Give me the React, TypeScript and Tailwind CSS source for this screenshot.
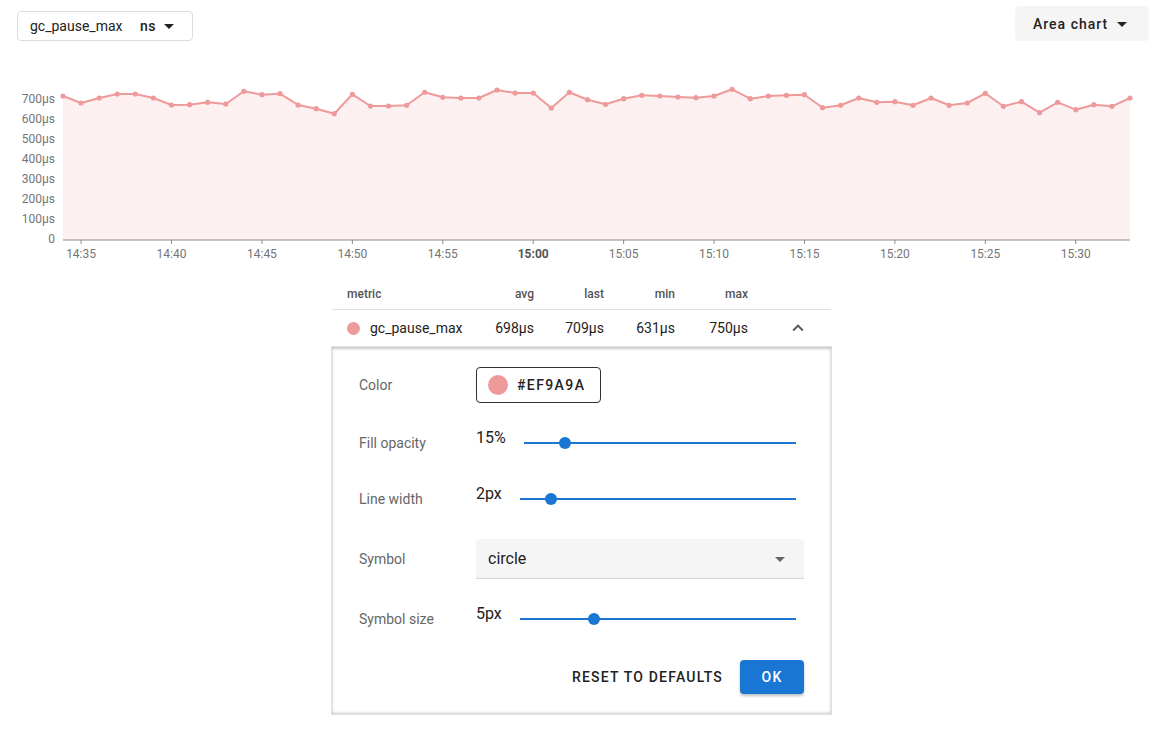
import React from 'react';

// y positions (page px) of each minute sample, 14:34 → 15:33
const ys = [
  96, 103, 98, 94, 94, 98, 105, 104.7, 102.3, 104, 91.3, 94.7, 93.7, 105, 108.7, 113.7, 94.3, 106, 106, 105.3,
  92.3, 97.3, 98, 98, 90, 93, 93, 108, 92.3, 99.7, 104.3, 98.7, 95.3, 96, 97, 97.7, 96, 89.3, 98.7, 96,
  95.3, 94.7, 107.7, 105.3, 98, 102.3, 101.7, 105.3, 98, 105.3, 103, 93.3, 106.3, 101.7, 112.7, 102.3, 109.7, 104.7, 106.3, 98,
];

const X0 = 63;
const X1 = 1130;
const BASE = 240;
const step = (X1 - X0) / (ys.length - 1);
const xAt = (i: number) => X0 + i * step;

const yTicks = ['700µs', '600µs', '500µs', '400µs', '300µs', '200µs', '100µs', '0'];
const xTicks = ['14:35', '14:40', '14:45', '14:50', '14:55', '15:00', '15:05', '15:10', '15:15', '15:20', '15:25', '15:30'];

const Caret: React.FC<{ className?: string }> = ({ className }) => (
  <svg viewBox="0 0 24 24" className={className} fill="currentColor">
    <path d="M7 10l5 5 5-5z" />
  </svg>
);

const Chart: React.FC = () => {
  const pts = ys.map((y, i) => `${xAt(i).toFixed(1)},${y}`).join(' ');
  const area = `${X0},${BASE} ${pts} ${X1},${BASE}`;
  return (
    <svg viewBox="0 41 1164 229" className="block w-[1164px] h-[229px]">
      <polygon points={area} fill="#EF9A9A" fillOpacity={0.15} />
      <polyline points={pts} fill="none" stroke="#EF9A9A" strokeWidth={2} strokeLinejoin="round" />
      {ys.map((y, i) => (
        <circle key={i} cx={xAt(i)} cy={y} r={2.6} fill="#EF9A9A" />
      ))}
      <line x1={X0} y1={BASE} x2={X1} y2={BASE} stroke="#8a8a8a" strokeWidth={1} />
      {yTicks.map((t, i) => (
        <text key={t} x={55} y={98 + i * 20.1 + 4.5} textAnchor="end" fontSize={12} fill="#757575">
          {t}
        </text>
      ))}
      {xTicks.map((t, i) => {
        const x = xAt(1 + i * 5);
        const bold = t === '15:00';
        return (
          <g key={t}>
            <line x1={x} y1={BASE} x2={x} y2={BASE + 4} stroke="#8a8a8a" strokeWidth={1} />
            <text
              x={x}
              y={257.5}
              textAnchor="middle"
              fontSize={12}
              fill={bold ? '#555' : '#757575'}
              fontWeight={bold ? 700 : 400}
            >
              {t}
            </text>
          </g>
        );
      })}
    </svg>
  );
};

const Slider: React.FC<{ value: string; frac: number }> = ({ value, frac }) => (
  <div className="flex items-center flex-1 pr-[8px] gap-[18px]">
    <span className="text-[16px] text-[#222] mb-[10px]">{value}</span>
    <div className="relative flex-1 h-[2px] bg-[#1976d2]">
      <div
        className="absolute top-1/2 w-[12px] h-[12px] -mt-[6px] -ml-[6px] rounded-full bg-[#1976d2]"
        style={{ left: `${frac * 100}%` }}
      />
    </div>
  </div>
);

const Row: React.FC<{ label: string; children: React.ReactNode }> = ({ label, children }) => (
  <div className="flex items-center h-[40px]">
    <span className="w-[117px] text-[14px] text-[#666]">{label}</span>
    <div className="flex-1 flex items-center">{children}</div>
  </div>
);

export default function App() {
  return (
    <div className="w-[1164px] h-[734px] bg-white font-['Roboto','Liberation_Sans',sans-serif] text-[#222] overflow-hidden">
      <div className="flex items-end justify-between pl-[17px] pr-[15px] pt-[6px]">
        <div className="flex items-center w-[176px] h-[30px] border border-[#dcdcdc] rounded-[4px] pl-[12px] pr-[18px]">
          <span className="text-[14px] text-[#222]">gc_pause_max</span>
          <span className="ml-auto text-[14px] font-medium tracking-[0.5px] text-[#222]">ns</span>
          <Caret className="w-[24px] h-[24px] -mr-[7px] ml-[1px] text-[#222]" />
        </div>
        <div className="flex items-center w-[134px] h-[35px] bg-[#f5f5f5] rounded-[4px] pl-[18px] pt-[1px]">
          <span className="text-[14px] font-medium tracking-[1px] text-[#222]">Area chart</span>
          <Caret className="w-[24px] h-[24px] ml-[2px] text-[#222]" />
        </div>
      </div>

      <Chart />

      <div className="w-[501px] ml-[331px] mt-[9px]">
        <div className="flex items-center h-[31px] pl-[15px] mx-[1px] text-[12px] font-medium text-[#555] border-b border-[#e0e0e0]">
          <span className="w-[137px]">metric</span>
          <span className="w-[50px] text-right">avg</span>
          <span className="w-[70px] text-right">last</span>
          <span className="w-[71px] text-right">min</span>
          <span className="w-[73px] text-right">max</span>
        </div>
        <div className="flex items-center h-[36px] pl-[16px] text-[14px] text-[#222]">
          <span className="w-[137px] flex items-center gap-[10px]">
            <span className="w-[13px] h-[13px] rounded-full bg-[#EF9A9A]" />
            gc_pause_max
          </span>
          <span className="w-[50px] text-right">698µs</span>
          <span className="w-[70px] text-right">709µs</span>
          <span className="w-[71px] text-right">631µs</span>
          <span className="w-[73px] text-right">750µs</span>
          <svg viewBox="0 0 24 24" className="w-[22px] h-[22px] ml-[39px] text-[#555]" fill="currentColor">
            <path d="M12 8l-6 6 1.41 1.41L12 10.83l4.59 4.58L18 14z" />
          </svg>
        </div>

        <div className="border border-[#e2e2e2] shadow-[inset_0_2px_3px_rgba(0,0,0,0.22),inset_0_-2px_2px_rgba(0,0,0,0.12)] pt-[18px] pb-[20px] pl-[27px] pr-[27px]">
          <Row label="Color">
            <div className="flex items-center w-[125px] h-[36px] border border-[#333] rounded-[4px] pl-[11px] gap-[9px]">
              <span className="w-[20px] h-[20px] rounded-full bg-[#EF9A9A]" />
              <span className="text-[14px] font-medium tracking-[1.4px] text-[#222]">#EF9A9A</span>
            </div>
          </Row>
          <div className="mt-[18px]">
            <Row label="Fill opacity">
              <Slider value="15%" frac={0.15} />
            </Row>
          </div>
          <div className="mt-[16px]">
            <Row label="Line width">
              <Slider value="2px" frac={0.112} />
            </Row>
          </div>
          <div className="mt-[20px]">
            <Row label="Symbol">
              <div className="flex items-center flex-1 h-[40px] bg-[#f5f5f5] rounded-t-[4px] border-b border-[#d6d6d6] pl-[12px] pr-[12px]">
                <span className="text-[16px] text-[#222]">circle</span>
                <Caret className="w-[24px] h-[24px] ml-auto text-[#666]" />
              </div>
            </Row>
          </div>
          <div className="mt-[20px]">
            <Row label="Symbol size">
              <Slider value="5px" frac={0.267} />
            </Row>
          </div>
          <div className="flex items-center justify-end gap-[9px] mt-[21px]">
            <button className="h-[34px] px-[8px] text-[14px] font-medium tracking-[1.2px] text-[#222]">
              RESET TO DEFAULTS
            </button>
            <button className="w-[64px] h-[34px] rounded-[4px] bg-[#1976d2] text-white text-[14px] font-medium tracking-[1.25px] shadow-[0_2px_3px_rgba(0,0,0,0.25)]">
              OK
            </button>
          </div>
        </div>
      </div>
    </div>
  );
}
